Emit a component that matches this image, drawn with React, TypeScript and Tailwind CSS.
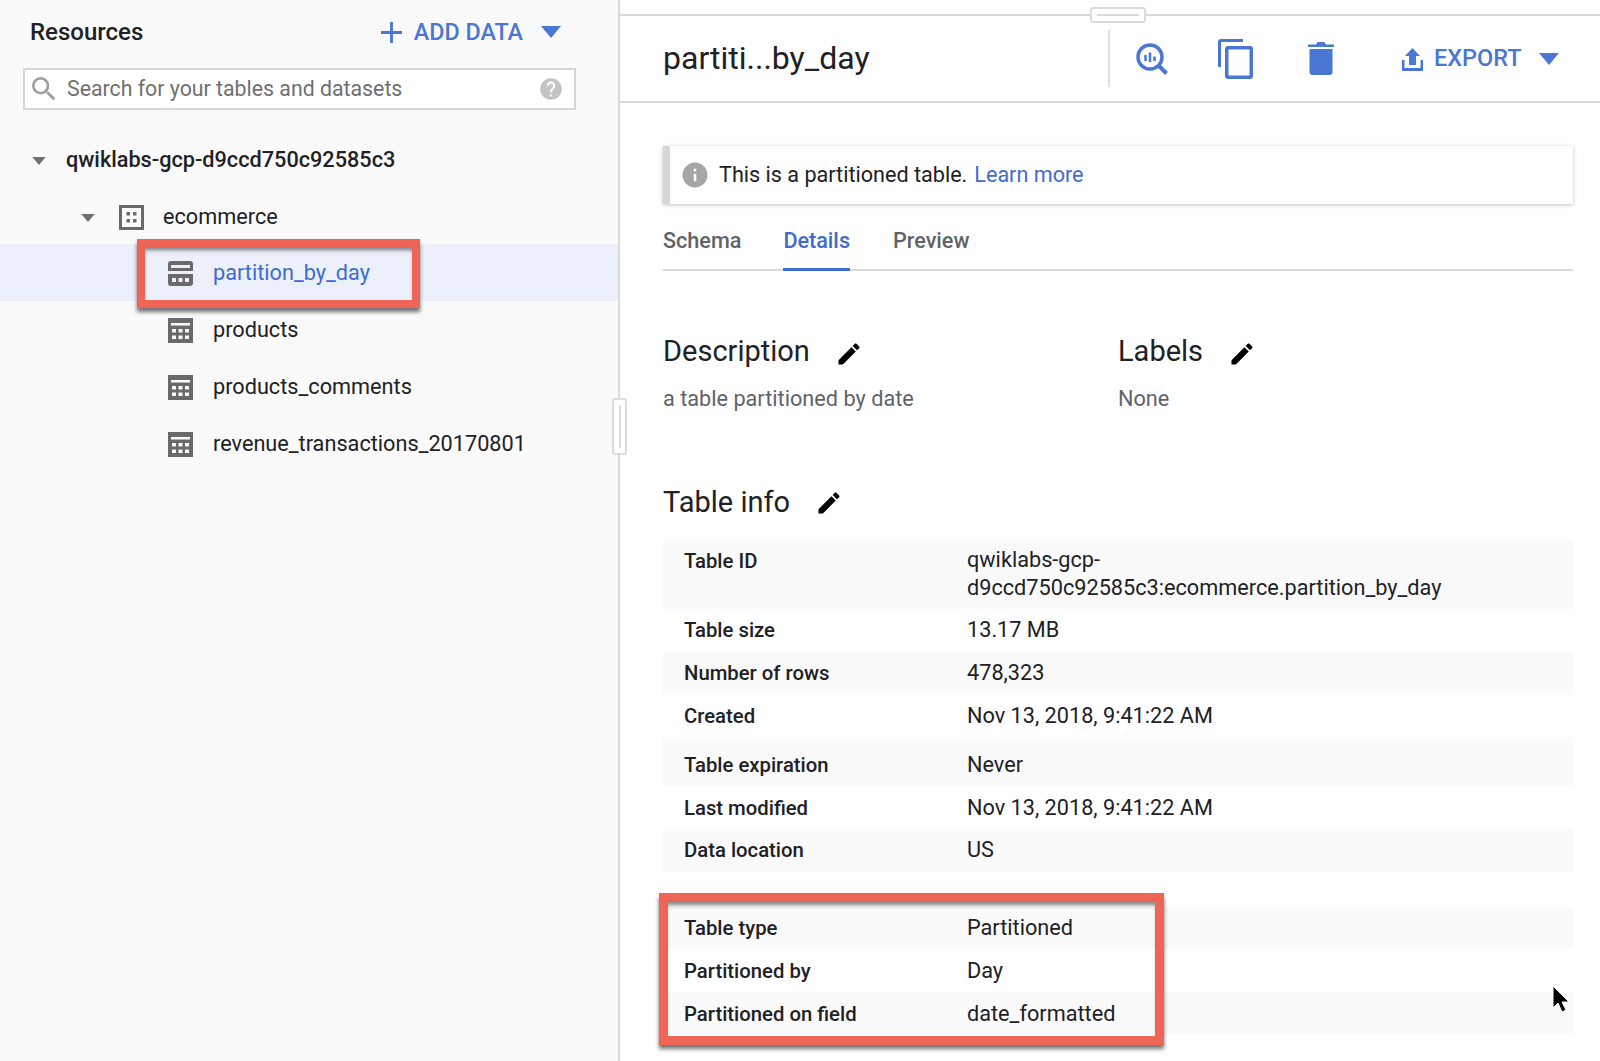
const font = "font-['Roboto',sans-serif]";

const Edit = ({className}: {className: string}) => (
  <svg viewBox="0 0 24 24" className={className} fill="currentColor">
    <path d="M3 17.25V21h3.75L17.81 9.94l-3.75-3.75L3 17.25zM20.71 7.04c.39-.39.39-1.02 0-1.41l-2.34-2.34c-.39-.39-1.02-.39-1.41 0l-1.83 1.83 3.75 3.75 1.83-1.83z" />
  </svg>
);

const Caret = ({className}: {className: string}) => (
  <svg viewBox="0 0 20 12" className={className} fill="currentColor">
    <path d="M0 0h20L10 12z" />
  </svg>
);

const TableIcon = () => (
  <svg viewBox="0 0 25 25" className="w-[25px] h-[25px] text-[#6a6a6c] shrink-0" fill="currentColor">
    <path
      fillRule="evenodd"
      d="M0 0h25v25H0zM3 5v2.500h19V5zM4 11v3.500h4V11zm6.500 0v3.500h4V11zm6.500 0v3.500h4V11zM4 17.500V21h4v-3.500zm6.500 0V21h4v-3.500zm6.500 0V21h4v-3.500z"
    />
  </svg>
);

const PartitionIcon = () => (
  <svg viewBox="0 0 25 25" className="w-[25px] h-[25px] text-[#6a6a6c] shrink-0" fill="currentColor">
    <path
      fillRule="evenodd"
      d="M3 0h19a3 3 0 0 1 3 3v7H0V3a3 3 0 0 1 3-3zM3 4v3h19V4zM0 13h25v9a3 3 0 0 1-3 3H3a3 3 0 0 1-3-3zM4 17v4h4v-4zm6.500 0v4h4v-4zm6.500 0v4h4v-4z"
    />
  </svg>
);

const DatasetIcon = () => (
  <svg viewBox="0 0 25 25" className="w-[25px] h-[25px] text-[#6a6a6c] shrink-0" fill="currentColor">
    <path
      fillRule="evenodd"
      d="M0 0h25v25H0zM3 3v19h19V3zM7.500 7H11v3.500H7.500zm6.500 0h3.500v3.500H14zM7.500 14H11v3.500H7.500zm6.500 0h3.500v3.500H14z"
    />
  </svg>
);

const treeRows = [
  {name: "products"},
  {name: "products_comments"},
  {name: "revenue_transactions_20170801"},
];

const infoA: [string, string, string][] = [
  ["Table size", "13.17 MB", "h-[43px] bg-white"],
  ["Number of rows", "478,323", "h-[43px] bg-[#fafafa]"],
  ["Created", "Nov 13, 2018, 9:41:22 AM", "h-[42px] bg-white pt-[2px]"],
  ["Table expiration", "Never", "h-[49px] bg-[#fafafa] pt-[8px]"],
  ["Last modified", "Nov 13, 2018, 9:41:22 AM", "h-[43px] bg-white pt-[2px]"],
  ["Data location", "US", "h-[43px] bg-[#fafafa]"],
];

const infoB: [string, string, string][] = [
  ["Table type", "Partitioned", "h-[42px] bg-[#fafafa] pt-[2px]"],
  ["Partitioned by", "Day", "h-[43px] bg-white pt-[2px]"],
  ["Partitioned on field", "date_formatted", "h-[42px] bg-[#fafafa] pt-[3px]"],
];

const InfoRow = ({row}: {row: [string, string, string]}) => (
  <div className={`flex items-center px-[21px] text-[21.7px] ${row[2]}`}>
    <div className="w-[283px] font-medium text-[#202124] text-[20.3px]">{row[0]}</div>
    <div className="text-[#202124]">{row[1]}</div>
  </div>
);

const App = () => {
  return (
    <div className={`flex w-[1600px] h-[1061px] overflow-hidden relative bg-white ${font}`}>
      {/* left panel */}
      <div className="w-[620px] h-full bg-[#fafafa] border-r-2 border-[#d9d9d9] shrink-0 relative">
        <div className="flex items-center justify-between pl-[30px] pr-[57px] h-[64px]">
          <span className="text-[24px] font-medium text-[#202124]">Resources</span>
          <div className="flex items-center text-[#4a77d4]">
            <svg viewBox="0 0 22 22" className="w-[21px] h-[21px]" fill="currentColor">
              <path d="M9.500 0h3v9.500H22v3h-9.500V22h-3v-9.500H0v-3h9.500z" />
            </svg>
            <span className="ml-[12px] text-[23.3px] font-medium">ADD DATA</span>
            <Caret className="ml-[18px] w-[20px] h-[12px]" />
          </div>
        </div>
        <div className="ml-[23px] mt-[4px] w-[553px] h-[42px] bg-white border-2 border-[#d6d6d6] flex items-center pl-[4px] pr-[10px]">
          <svg viewBox="0 0 24 24" className="w-[32px] h-[32px] text-[#9e9e9e] -ml-[1px]" fill="currentColor">
            <path d="M15.500 14h-.79l-.28-.27A6.471 6.471 0 0 0 16 9.500 6.500 6.500 0 1 0 9.500 16c1.610 0 3.090-.59 4.230-1.570l.27.28v.79l5 4.990L20.490 19l-4.990-5zm-6 0C7.010 14 5 11.990 5 9.500S7.010 5 9.500 5 14 7.010 14 9.500 11.990 14 9.500 14z" />
          </svg>
          <span className="ml-[7px] text-[21.3px] text-[#6f6f6f] flex-1">Search for your tables and datasets</span>
          <svg viewBox="0 0 24 24" className="w-[26px] h-[26px] text-[#c4c4c4]" fill="currentColor">
            <path d="M12 2C6.480 2 2 6.480 2 12s4.480 10 10 10 10-4.480 10-10S17.520 2 12 2zm1 17h-2v-2h2v2zm2.070-7.750l-.9.920C13.450 12.900 13 13.500 13 15h-2v-.5c0-1.100.45-2.100 1.170-2.830l1.240-1.260c.37-.36.59-.86.59-1.410 0-1.100-.9-2-2-2s-2 .9-2 2H8c0-2.210 1.790-4 4-4s4 1.790 4 4c0 .88-.36 1.680-.93 2.250z" />
          </svg>
        </div>
        <div className="mt-[20px]">
          <div className="flex items-center h-[57px] pl-[32px] pt-[4px]">
            <Caret className="w-[14px] h-[8px] text-[#6f6f6f]" />
            <span className="ml-[20px] text-[21.7px] font-medium text-[#202124]">qwiklabs-gcp-d9ccd750c92585c3</span>
          </div>
          <div className="flex items-center h-[57px] pl-[81px] pt-[4px]">
            <Caret className="w-[14px] h-[8px] text-[#6f6f6f]" />
            <span className="ml-[24px]"><DatasetIcon /></span>
            <span className="ml-[19px] text-[21.7px] text-[#202124]">ecommerce</span>
          </div>
          <div className="flex items-center h-[57px] pl-[168px] pt-[2px] bg-[#ecf0fa]">
            <PartitionIcon />
            <span className="ml-[20px] text-[21.7px] text-[#3f6bd0]">partition_by_day</span>
          </div>
          {treeRows.map((row) => (
            <div key={row.name} className="flex items-center h-[57px] pl-[168px] pt-[2px]">
              <TableIcon />
              <span className="ml-[20px] text-[21.7px] text-[#202124]">{row.name}</span>
            </div>
          ))}
        </div>
        {/* panel resize handle */}
        <div className="absolute right-[-9px] top-[398px] w-[15px] h-[57px] bg-white border-2 border-[#dcdcdc] rounded-[3px] flex justify-center">
          <div className="w-[2px] h-[43px] mt-[5px] bg-[#dcdcdc]" />
        </div>
        <div className="absolute left-[137px] top-[239px] w-[283px] h-[69px] border-[8px] border-[#ef6555] shadow-[0_4px_4px_rgba(0,0,0,0.55),inset_0_5px_4px_-2px_rgba(0,0,0,0.5)]" />
      </div>

      {/* right panel */}
      <div className="flex-1 min-w-0 relative">
        <div className="h-[89px] mt-[14px] border-t-2 border-b-2 border-[#d9d9d9] flex items-center pl-[43px] relative">
          <span className="text-[32px] text-[#202124] w-[445px] -mt-[1px]">partiti...by_day</span>
          <div className="w-[2px] h-[57px] bg-[#dedede]" />
          <svg viewBox="0 0 32 32" className="ml-[26px] w-[32px] h-[32px] text-[#4a77d4]" fill="none" stroke="currentColor">
            <circle cx="14" cy="14" r="12" strokeWidth="3.500" />
            <path d="M22.500 22.500l8 8" strokeWidth="4" />
            <path d="M9.500 12v6M14 9.500V19M18.500 13.500V18" strokeWidth="2.500" />
          </svg>
          <svg viewBox="0 0 35 40" className="ml-[50px] w-[35px] h-[40px] text-[#4a77d4]" fill="currentColor">
            <path fillRule="evenodd" d="M3 0h22v3H3v25H0V3a3 3 0 0 1 3-3zM10 7h22a3 3 0 0 1 3 3v27a3 3 0 0 1-3 3H10a3 3 0 0 1-3-3V10a3 3 0 0 1 3-3zm.5 3.500v26h21v-26z" />
          </svg>
          <svg viewBox="0 0 26 33" className="ml-[55px] w-[26px] h-[33px] text-[#4a77d4]" fill="currentColor">
            <path d="M1.500 7h23v23a3 3 0 0 1-3 3h-17a3 3 0 0 1-3-3zM0 2.500h8L9.500 0h7L18 2.500h8V5H0z" />
          </svg>
          <svg viewBox="0 0 21 23" className="ml-[68px] w-[21px] h-[23px] text-[#4a77d4] mt-[1px]" fill="currentColor">
            <path d="M10.500 0L18 8h-4v9H7V8H3zM0 12h2.500v8h16v-8H21v11H0z" />
          </svg>
          <span className="ml-[11px] text-[23.5px] font-medium text-[#4a77d4]">EXPORT</span>
          <Caret className="ml-[17px] w-[20px] h-[12px] text-[#4a77d4]" />
          <div className="absolute left-[470px] top-[-9px] w-[56px] h-[16px] bg-white border-2 border-[#dcdcdc] rounded-[3px] flex items-center justify-center">
            <div className="w-[42px] h-[2px] bg-[#d9d9d9]" />
          </div>
        </div>

        <div className="pl-[43px] pr-[27px]">
          <div className="mt-[43px] h-[58px] bg-white border-l-[7px] border-[#d6d6d6] shadow-[0_1px_4px_rgba(0,0,0,0.25)] flex items-center pl-[11px] text-[21.6px]">
            <svg viewBox="0 0 24 24" className="w-[30px] h-[30px] text-[#a6a6a6] -ml-[1px]" fill="currentColor">
              <path d="M12 2C6.480 2 2 6.480 2 12s4.480 10 10 10 10-4.480 10-10S17.520 2 12 2zm1 15h-2v-6h2v6zm0-8h-2V7h2v2z" />
            </svg>
            <span className="ml-[9px] text-[#202124]">This is a partitioned table.</span>
            <span className="ml-[7px] text-[#3f6bd0]">Learn more</span>
          </div>
          <div className="mt-[14px] h-[53px] flex border-b-2 border-[#dadada] text-[21.6px] font-medium">
            <div className="pt-[7px] text-[#5f6368]">Schema</div>
            <div className="ml-[42px] pt-[7px] text-[#3f6bd0] border-b-[3px] border-[#3f6bd0] h-[53px]">Details</div>
            <div className="ml-[43px] pt-[7px] text-[#5f6368]">Preview</div>
          </div>

          <div className="mt-[61px] flex">
            <div className="w-[455px]">
              <div className="flex items-center h-[40px]">
                <span className="text-[29px] text-[#202124]">Description</span>
                <Edit className="ml-[25px] w-[28px] h-[28px] mt-[3px] text-black" />
              </div>
              <div className="mt-[11px] text-[21.7px] text-[#5f6368]">a table partitioned by date</div>
            </div>
            <div>
              <div className="flex items-center h-[40px]">
                <span className="text-[29px] text-[#202124]">Labels</span>
                <Edit className="ml-[25px] w-[28px] h-[28px] mt-[3px] text-black" />
              </div>
              <div className="mt-[11px] text-[21.7px] text-[#5f6368]">None</div>
            </div>
          </div>

          <div className="mt-[67px] flex items-center h-[40px]">
            <span className="text-[29px] text-[#202124]">Table info</span>
            <Edit className="ml-[25px] w-[28px] h-[28px] mt-[1px] text-black" />
          </div>

          <div className="mt-[16px]">
            <div className="flex px-[21px] h-[70px] bg-[#fafafa] text-[21.7px] pt-[7px]">
              <div className="w-[283px] font-medium text-[#202124] text-[20.3px]">Table ID</div>
              <div className="text-[#202124] leading-[28px]">
                qwiklabs-gcp-
                <br />
                d9ccd750c92585c3:ecommerce.partition_by_day
              </div>
            </div>
            {infoA.map((row) => (
              <InfoRow key={row[0]} row={row} />
            ))}
          </div>
          <div className="mt-[35px]">
            {infoB.map((row) => (
              <InfoRow key={row[0]} row={row} />
            ))}
          </div>
        </div>

        {/* callout */}
        <div className="absolute left-[39px] top-[893px] w-[505px] h-[152px] border-[9px] border-[#ef6555] shadow-[0_4px_4px_rgba(0,0,0,0.55),inset_0_5px_4px_-2px_rgba(0,0,0,0.5)]" />
        {/* cursor */}
        <svg viewBox="0 0 18 28" className="absolute left-[932px] top-[985px] w-[18px] h-[28px]">
          <path d="M1 1v22l5-5 4 9 4-2-4-8h7z" fill="#000" stroke="#fff" strokeWidth="1" />
        </svg>
      </div>
    </div>
  );
};

export default App;
